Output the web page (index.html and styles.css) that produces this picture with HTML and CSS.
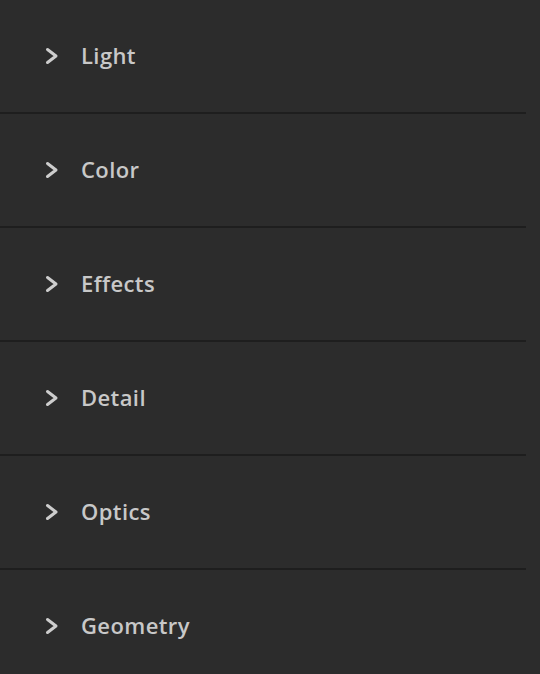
FILE: index.html
```html
<!DOCTYPE html>
<html>
<head>
<meta charset="utf-8">
<link rel="stylesheet" href="styles.css">
</head>
<body>
<div class="panel">
  <div class="section"><svg class="chev" viewBox="0 0 16 20"><path d="M3.5 3.5 L12 10 L3.5 16.5"/></svg><span class="label">Light</span></div>
  <div class="section"><svg class="chev" viewBox="0 0 16 20"><path d="M3.5 3.5 L12 10 L3.5 16.5"/></svg><span class="label">Color</span></div>
  <div class="section"><svg class="chev" viewBox="0 0 16 20"><path d="M3.5 3.5 L12 10 L3.5 16.5"/></svg><span class="label">Effects</span></div>
  <div class="section"><svg class="chev" viewBox="0 0 16 20"><path d="M3.5 3.5 L12 10 L3.5 16.5"/></svg><span class="label">Detail</span></div>
  <div class="section"><svg class="chev" viewBox="0 0 16 20"><path d="M3.5 3.5 L12 10 L3.5 16.5"/></svg><span class="label">Optics</span></div>
  <div class="section"><svg class="chev" viewBox="0 0 16 20"><path d="M3.5 3.5 L12 10 L3.5 16.5"/></svg><span class="label">Geometry</span></div>
</div>
</body>
</html>
```
FILE: styles.css
```css
html, body {
  margin: 0;
  padding: 0;
  background: #2c2c2c;
  height: 100%;
  overflow: hidden;
}
.panel {
  width: 526px;
  display: flex;
  flex-direction: column;
}
.section {
  height: 112px;
  border-bottom: 2px solid #1e1e1e;
  display: flex;
  align-items: center;
  padding-left: 44px;
}
.chev {
  width: 16px;
  height: 20px;
  fill: none;
  stroke: #cdcdcd;
  stroke-width: 3;
  stroke-linecap: round;
  stroke-linejoin: round;
  margin-right: 21px;
}
.label {
  font-family: "Open Sans", sans-serif;
  font-weight: 600;
  font-size: 22px;
  color: #c8c8c8;
  letter-spacing: 0.4px;
  margin-bottom: 2px;
}
```
